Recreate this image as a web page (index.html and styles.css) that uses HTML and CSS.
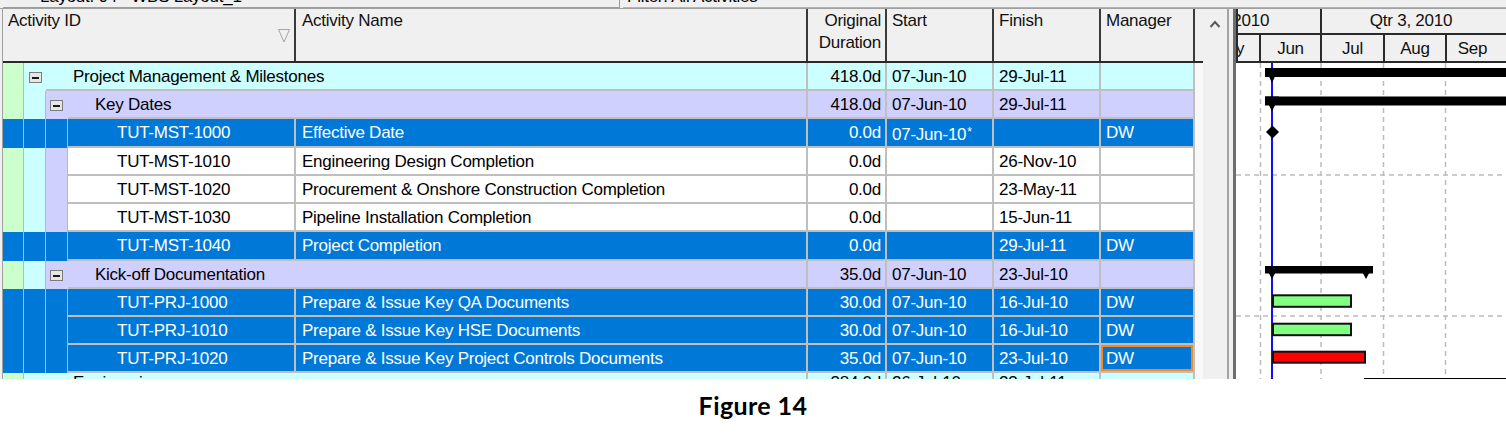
FILE: index.html
```html
<!DOCTYPE html>
<html>
<head>
<meta charset="utf-8">
<link rel="stylesheet" href="styles.css">
</head>
<body>
<div class="top">
  <div class="tb tb1"><span class="tbt">Layout: 04 - WBS Layout_1</span></div>
  <div class="tb tb2"><span class="tbt">Filter: All Activities</span></div>
</div>
<div class="main">
  <div class="frame"></div>
  <div class="left">
    <div class="hdr">
      <div class="hc h-id"><span>Activity ID</span><svg class="filt" width="12" height="14" viewBox="0 0 12 14"><polygon points="0.5,0.5 11.5,0.5 6,13" fill="none" stroke="#a4a4a4" stroke-width="1"/></svg></div>
      <div class="hc h-nm">Activity Name</div>
      <div class="hc h-dur">Original<br>Duration</div>
      <div class="hc h-d">Start</div>
      <div class="hc h-d">Finish</div>
      <div class="hc h-d">Manager</div>
      <div class="hfill"></div>
    </div>

    <div class="r w1">
      <div class="b g"></div>
      <div class="tg t1"><i class="tog"></i></div>
      <div class="c s35 wt1">Project Management &amp; Milestones</div>
      <div class="c n">418.0d</div><div class="c d">07-Jun-10</div><div class="c d">29-Jul-11</div><div class="c d"></div>
    </div>

    <div class="r w2">
      <div class="b g"></div><div class="b cy"></div>
      <div class="tg t2"><i class="tog"></i></div>
      <div class="c s45 wt2">Key Dates</div>
      <div class="c n">418.0d</div><div class="c d">07-Jun-10</div><div class="c d">29-Jul-11</div><div class="c d"></div>
    </div>

    <div class="r sel tall">
      <div class="b"></div><div class="b"></div><div class="b"></div>
      <div class="c id">TUT-MST-1000</div><div class="c nm">Effective Date</div><div class="c n">0.0d</div><div class="c d">07-Jun-10<span class="ast">*</span></div><div class="c d"></div><div class="c d">DW</div>
    </div>

    <div class="r act">
      <div class="b g"></div><div class="b cy"></div><div class="b lv"></div>
      <div class="c id">TUT-MST-1010</div><div class="c nm">Engineering Design Completion</div><div class="c n">0.0d</div><div class="c d"></div><div class="c d">26-Nov-10</div><div class="c d"></div>
    </div>

    <div class="r act">
      <div class="b g"></div><div class="b cy"></div><div class="b lv"></div>
      <div class="c id">TUT-MST-1020</div><div class="c nm">Procurement &amp; Onshore Construction Completion</div><div class="c n">0.0d</div><div class="c d"></div><div class="c d">23-May-11</div><div class="c d"></div>
    </div>

    <div class="r act">
      <div class="b g"></div><div class="b cy"></div><div class="b lv"></div>
      <div class="c id">TUT-MST-1030</div><div class="c nm">Pipeline Installation Completion</div><div class="c n">0.0d</div><div class="c d"></div><div class="c d">15-Jun-11</div><div class="c d"></div>
    </div>

    <div class="r sel tall">
      <div class="b"></div><div class="b"></div><div class="b"></div>
      <div class="c id">TUT-MST-1040</div><div class="c nm">Project Completion</div><div class="c n">0.0d</div><div class="c d"></div><div class="c d">29-Jul-11</div><div class="c d">DW</div>
    </div>

    <div class="r w2">
      <div class="b g"></div><div class="b cy"></div>
      <div class="tg t2"><i class="tog"></i></div>
      <div class="c s45 wt2">Kick-off Documentation</div>
      <div class="c n">35.0d</div><div class="c d">07-Jun-10</div><div class="c d">23-Jul-10</div><div class="c d"></div>
    </div>

    <div class="r sel">
      <div class="b"></div><div class="b"></div><div class="b"></div>
      <div class="c id">TUT-PRJ-1000</div><div class="c nm">Prepare &amp; Issue Key QA Documents</div><div class="c n">30.0d</div><div class="c d">07-Jun-10</div><div class="c d">16-Jul-10</div><div class="c d">DW</div>
    </div>

    <div class="r sel">
      <div class="b"></div><div class="b"></div><div class="b"></div>
      <div class="c id">TUT-PRJ-1010</div><div class="c nm">Prepare &amp; Issue Key HSE Documents</div><div class="c n">30.0d</div><div class="c d">07-Jun-10</div><div class="c d">16-Jul-10</div><div class="c d">DW</div>
    </div>

    <div class="r sel">
      <div class="b"></div><div class="b"></div><div class="b"></div>
      <div class="c id">TUT-PRJ-1020</div><div class="c nm">Prepare &amp; Issue Key Project Controls Documents</div><div class="c n">35.0d</div><div class="c d">07-Jun-10</div><div class="c d">23-Jul-10</div><div class="c d focus">DW</div>
    </div>

    <div class="r w1 last">
      <div class="b g"></div>
      <div class="tg t1"></div>
      <div class="c s35 wt1">Engineering</div>
      <div class="c n">384.0d</div><div class="c d">26-Jul-10</div><div class="c d">23-Jul-11</div><div class="c d"></div>
    </div>
  </div>

  <div class="vs">
    <svg width="12" height="8" viewBox="0 0 12 8"><polyline points="1.5,7 6,2 10.5,7" fill="none" stroke="#5a5a5a" stroke-width="2"/></svg>
  </div>
  <div class="split"></div>

  <div class="gantt">
    <div class="ghdr">
      <div class="tier tier1">
        <div class="gc q2"><div class="wide">Qtr 2, 2010</div></div>
        <div class="gc q3">Qtr 3, 2010</div>
      </div>
      <div class="tier tier2">
        <div class="gc m-may"><div class="wide">May</div></div>
        <div class="gc m-jun">Jun</div>
        <div class="gc m-jul">Jul</div>
        <div class="gc m-aug">Aug</div>
        <div class="gc m-sep">Sep</div>
      </div>
    </div>
    <svg class="gbody" width="270" height="316" viewBox="0 0 270 316">
      <g stroke="#bcbcbc" stroke-width="1.5" stroke-dasharray="5 4" fill="none">
        <line x1="24.5" y1="0" x2="24.5" y2="316"/>
        <line x1="85" y1="0" x2="85" y2="316"/>
        <line x1="147.5" y1="0" x2="147.5" y2="316"/>
        <line x1="209.5" y1="0" x2="209.5" y2="316"/>
        <line x1="0" y1="112" x2="270" y2="112"/>
        <line x1="0" y1="253" x2="270" y2="253"/>
      </g>
      <line x1="36" y1="0" x2="36" y2="316" stroke="#1010ff" stroke-width="2"/>
      <rect x="29" y="5" width="241" height="9" fill="#000"/>
      <polygon points="29,5 43,5 36,20" fill="#000"/>
      <rect x="29" y="33.5" width="241" height="9" fill="#000"/>
      <polygon points="29,33.5 43,33.5 36,48.5" fill="#000"/>
      <polygon points="36.5,62.5 43,69 36.5,75.5 30,69" fill="#000"/>
      <rect x="29" y="203" width="108" height="7.5" fill="#000"/>
      <polygon points="29,203 43,203 36,216" fill="#000"/>
      <polygon points="123,203 137,203 130,216" fill="#000"/>
      <rect x="37" y="232.3" width="78" height="11.5" fill="#80ff80" stroke="#111" stroke-width="2"/>
      <rect x="37" y="260.7" width="78" height="11.5" fill="#80ff80" stroke="#111" stroke-width="2"/>
      <rect x="37" y="288.7" width="92" height="11" fill="#ff0000" stroke="#111" stroke-width="2"/>
      <rect x="128" y="315" width="142" height="2" fill="#000"/>
    </svg>
  </div>
</div>
<div class="cap">Figure 14</div>
</body>
</html>
```

FILE: styles.css
```css
* { box-sizing: border-box; }

body {
  margin: 0;
  width: 1506px;
  height: 440px;
  overflow: hidden;
  background: #ffffff;
  font-family: "Liberation Sans", Arial, sans-serif;
  font-size: 17px;
  letter-spacing: -0.25px;
  color: #000;
}

/* top toolbar strip (mostly cut off) */
.top {
  display: flex;
  height: 8px;
  background: #f0f0f0;
  overflow: hidden;
}
.tb { height: 8px; overflow: hidden; }
.tb1 {
  margin-left: 3px;
  width: 617px;
  padding-left: 37px;
  border-right: 1px solid #9c9c9c;
  border-bottom: 1px solid #9c9c9c;
}
.tb2 {
  margin-left: 3px;
  flex: 1;
  padding-left: 4px;
  border-bottom: 1px solid #b4b4b4;
}
.tbt {
  display: block;
  line-height: 19px;
  margin-top: -13px;
  white-space: nowrap;
}

/* main area */
.main {
  display: flex;
  height: 371px;
  border-top: 1px solid #a0a0a0;
  background: #f0f0f0;
  overflow: hidden;
}
.frame {
  flex: none;
  width: 3px;
  border-right: 1px solid #a0a0a0;
}
.left {
  flex: none;
  width: 1200px;
  background: #f8f8f8;
  display: flex;
  flex-direction: column;
  overflow: hidden;
}

/* header */
.hdr {
  flex: none;
  display: grid;
  grid-template-columns: 293px 512px 79px 107px 107px 94px 8px;
  height: 54px;
  background: #f0f0f0;
  border-bottom: 2px solid #2a2a2a;
  color: #111;
}
.hc {
  border-right: 2px solid #3a3a3a;
  padding-top: 1px;
  line-height: 22px;
  white-space: nowrap;
}
.h-id {
  display: flex;
  justify-content: space-between;
  padding-left: 5px;
}
.filt { margin: 19px 4px 0 0; }
.h-nm { padding-left: 6px; }
.h-dur { text-align: right; padding-right: 4px; }
.h-d { padding-left: 5px; }

/* rows */
.r {
  flex: none;
  display: grid;
  grid-template-columns: 21px 22px 22px 228px 512px 79px 107px 107px 94px;
  width: 1192px;
  height: 28px;
}
.r.tall { height: 29px; }

.w1 { background: #ccffff; }
.w2 { background: #d0d0ff; }
.act { background: #ffffff; }
.sel { background: #0078d7; color: #ffffff; }

.b { border-right: 1px solid #b9b9b9; }
.g { background: #ccffcc; }
.cy { background: #ccffff; }
.lv { background: #d0d0ff; }

.tog {
  display: flex;
  align-items: center;
  justify-content: center;
  width: 13px;
  height: 11px;
  margin-top: 9px;
  border: 1px solid #7c7c7c;
  background: #e6e6e6;
}
.tog::after {
  content: "";
  width: 7px;
  height: 2px;
  background: #1a1a1a;
}
.t1 .tog { margin-left: 5px; }
.t2 .tog { margin-left: 4px; }

.c {
  border-right: 2px solid #bfbfbf;
  border-bottom: 2px solid #bfbfbf;
  padding-top: 1px;
  line-height: 25px;
  white-space: nowrap;
  overflow: hidden;
}
.last .c { padding-top: 0; line-height: 20px; }
.s35 { grid-column: 3 / 6; }
.s45 { grid-column: 4 / 6; }
.wt1, .wt2 { padding-left: 27px; }
.id { padding-left: 49px; }
.nm { padding-left: 6px; }
.n { text-align: right; padding-right: 4px; }
.d { padding-left: 5px; }
.ast {
  font-size: 12px;
  vertical-align: 4px;
  margin-left: 1px;
}
.focus { box-shadow: inset 0 0 0 2px #f28a2a; }

/* vertical scrollbar + splitter */
.vs {
  flex: none;
  width: 24px;
  display: flex;
  justify-content: center;
  align-items: flex-start;
  padding-top: 11px;
}
.split {
  flex: none;
  width: 9px;
  border-left: 2px solid #a3a3a3;
  border-right: 3px solid #6e6e6e;
  background: #f0f0f0;
}

/* gantt */
.gantt {
  flex: none;
  width: 270px;
  background: #ffffff;
  display: flex;
  flex-direction: column;
  overflow: hidden;
}
.ghdr {
  flex: none;
  height: 54px;
  background: #f0f0f0;
  border-left: 2px solid #2a2a2a;
  border-bottom: 2px solid #2a2a2a;
  color: #111;
}
.tier {
  display: flex;
  height: 26px;
}
.tier1 { border-bottom: 2px solid #2a2a2a; }
.tier2 { height: 26px; }
.gc {
  flex: none;
  border-right: 2px solid #2a2a2a;
  overflow: hidden;
  text-align: center;
  line-height: 24px;
  white-space: nowrap;
}
.tier2 .gc { padding-top: 2px; }
.q2 { width: 84px; }
.q2 .wide { width: 184px; margin-left: -102px; }
.q3 { flex: 1; border-right: none; padding-right: 6px; }
.m-may { width: 23px; }
.m-may .wide { width: 61px; margin-left: -40px; }
.m-jun { width: 61px; }
.m-jul { width: 63px; }
.m-aug { width: 62px; }
.m-sep { flex: 1; border-right: none; padding-right: 8px; }
.gbody { display: block; flex: none; }

/* caption */
.cap {
  padding-top: 11px;
  text-align: center;
  font-family: Lato, "Liberation Sans", sans-serif;
  font-weight: 700;
  font-size: 25px;
  line-height: 30px;
  letter-spacing: 0.4px;
  color: #000;
}
```
